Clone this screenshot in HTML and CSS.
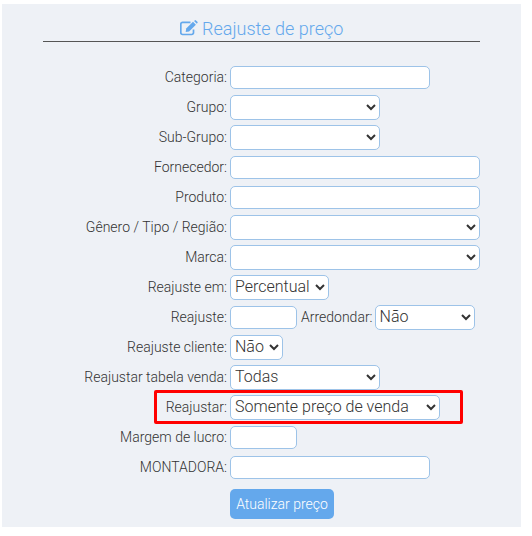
FILE: index.html
```html
<!DOCTYPE html>
<html lang="pt-BR">
<head>
<meta charset="UTF-8">
<title>Reajuste de preço</title>
<link rel="stylesheet" href="styles.css">
</head>
<body>
<div class="painel">
    <h2 class="titulo">
        <svg class="titulo-icone" viewBox="0 0 18 16" width="18" height="16" aria-hidden="true">
            <path d="M13.5 9.5v3.2a1.8 1.8 0 0 1-1.8 1.8H2.6a1.8 1.8 0 0 1-1.8-1.8V4.2a1.8 1.8 0 0 1 1.8-1.8h7.9" fill="none" stroke="currentColor" stroke-width="1.7"/>
            <path d="M6.2 8.6 13 1.8l2.9 2.9-6.8 6.8-3.4.5z" fill="currentColor"/>
            <path d="M14 .9l.7-.5a1 1 0 0 1 1.3 0l1.4 1.4a1 1 0 0 1 0 1.3l-.6.7z" fill="currentColor"/>
        </svg>
        Reajuste de preço
    </h2>

    <form class="formulario">
        <div class="linha">
            <label class="rotulo">Categoria:</label>
            <input type="text" class="campo w200">
        </div>
        <div class="linha">
            <label class="rotulo">Grupo:</label>
            <select class="campo w150"><option></option></select>
        </div>
        <div class="linha">
            <label class="rotulo">Sub-Grupo:</label>
            <select class="campo w150"><option></option></select>
        </div>
        <div class="linha">
            <label class="rotulo">Fornecedor:</label>
            <input type="text" class="campo w250">
        </div>
        <div class="linha">
            <label class="rotulo">Produto:</label>
            <input type="text" class="campo w250">
        </div>
        <div class="linha">
            <label class="rotulo">Gênero / Tipo / Região:</label>
            <select class="campo w250"><option></option></select>
        </div>
        <div class="linha">
            <label class="rotulo">Marca:</label>
            <select class="campo w250"><option></option></select>
        </div>
        <div class="linha">
            <label class="rotulo">Reajuste em:</label>
            <select class="campo w99"><option>Percentual</option></select>
        </div>
        <div class="linha">
            <label class="rotulo">Reajuste:</label>
            <input type="text" class="campo w67">
            <label class="rotulo-extra">Arredondar:</label>
            <select class="campo w100"><option>Não</option></select>
        </div>
        <div class="linha">
            <label class="rotulo">Reajuste cliente:</label>
            <select class="campo w53"><option>Não</option></select>
        </div>
        <div class="linha">
            <label class="rotulo">Reajustar tabela venda:</label>
            <select class="campo w150"><option>Todas</option></select>
        </div>
        <div class="linha">
            <span class="destaque"></span>
            <label class="rotulo">Reajustar:</label>
            <select class="campo w210"><option>Somente preço de venda</option></select>
        </div>
        <div class="linha">
            <label class="rotulo">Margem de lucro:</label>
            <input type="text" class="campo w67">
        </div>
        <div class="linha">
            <label class="rotulo">MONTADORA:</label>
            <input type="text" class="campo w200">
        </div>
        <div class="linha-botao">
            <button type="button" class="btn">Atualizar preço</button>
        </div>
    </form>
</div>
</body>
</html>
```

FILE: styles.css
```css
/* Estilos */
body {
    margin: 0;
    padding: 4px 0 0 2px;
    background-color: #fff;
    font-family: Roboto, sans-serif;
    font-size: 14px;
    font-weight: 300;
    color: #333;
}

.painel {
    width: 519px;
    height: 523px;
    box-sizing: border-box;
    padding: 12px 41px 0;
    background-color: #eef1f6;
}

.titulo {
    margin: 0;
    height: 25px;
    border-bottom: 1px solid #555;
    text-align: center;
    font-size: 18px;
    font-weight: 300;
    line-height: 25px;
    color: #64a8ec;
}

.titulo-icone {
    vertical-align: -1px;
}

.formulario {
    margin-top: 20px;
}

.linha {
    position: relative;
    display: flex;
    align-items: center;
    height: 30px;
    margin-left: -2px;
}

.rotulo {
    width: 186px;
    margin-right: 3px;
    text-align: right;
    flex-shrink: 0;
}

.rotulo-extra {
    margin: 0 2px 0 4px;
}

.campo {
    box-sizing: border-box;
    height: 23px;
    padding: 0 4px;
    background-color: #fff;
    border: 1px solid #9dc3e8;
    border-radius: 5px;
    font-family: Roboto, sans-serif;
    font-size: 16px;
    font-weight: 300;
    color: #333;
    outline: none;
}

select.campo {
    height: 25px;
    padding: 0 0 2px;
}

.w53 { width: 53px; }
.w67 { width: 67px; }
.w99 { width: 99px; }
.w100 { width: 100px; }
.w150 { width: 150px; }
.w200 { width: 200px; }
.w210 { width: 210px; }
.w250 { width: 250px; }

.destaque {
    position: absolute;
    left: 113px;
    top: -2px;
    width: 309px;
    height: 34px;
    box-sizing: border-box;
    border: 3px solid #f00;
    border-radius: 2px;
}

.linha-botao {
    margin: 7px 0 0 187px;
}

.btn {
    height: 30px;
    width: 104px;
    padding: 0;
    background-color: #64a8ec;
    border: none;
    border-radius: 5px;
    font-family: Roboto, sans-serif;
    font-size: 14px;
    font-weight: 300;
    color: #fff;
}
```
